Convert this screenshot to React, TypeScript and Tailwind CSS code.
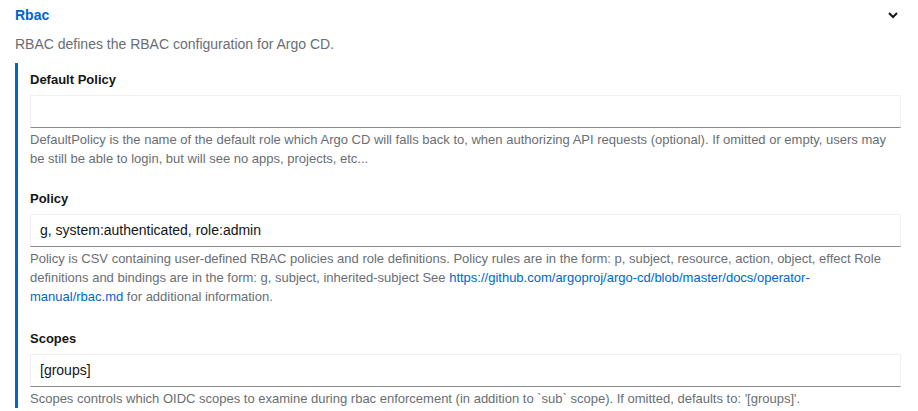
import React from "react";

const Field = ({
  label,
  value,
  children,
}: {
  label: string;
  value: string;
  children: React.ReactNode;
}) => {
  return (
    <div className="flex flex-col">
      <label className="text-[13px] leading-[20px] font-bold text-[#151515] mb-[5px]">
        {label}
      </label>
      <div className="h-[33px] border border-[#f0f0f0] border-b-[#8a8d90] bg-white px-[9px] flex items-center text-[14px] text-[#151515]">
        {value}
      </div>
      <p className="mt-[2px] text-[13px] leading-[19px] text-[#6a6e73]">
        {children}
      </p>
    </div>
  );
};

const App = () => {
  return (
    <div
      className="w-[918px] h-[411px] overflow-hidden bg-white pl-[15px] pr-[17px]"
      style={{ fontFamily: '"Liberation Sans", Arial, sans-serif' }}
    >
      <div className="flex items-center justify-between h-[30px]">
        <span className="text-[14px] font-bold text-[#0066cc]">Rbac</span>
        <svg width="10" height="8" viewBox="0 0 10 8" className="mr-[3px]">
          <path d="M1 2 L5 6 L9 2" fill="none" stroke="#151515" strokeWidth="2" />
        </svg>
      </div>
      <p className="mt-[4px] text-[14px] leading-[20px] text-[#6a6e73]">
        RBAC defines the RBAC configuration for Argo CD.
      </p>
      <div className="mt-[9px] border-l-[3px] border-[#0066cc] pl-[12px] pt-[7px] flex flex-col gap-[21px]">
        <Field label="Default Policy" value="">
          DefaultPolicy is the name of the default role which Argo CD will falls
          back to, when authorizing API requests (optional). If omitted or empty,
          users may be still be able to login, but will see no apps, projects,
          etc...
        </Field>
        <Field label="Policy" value="g, system:authenticated, role:admin">
          Policy is CSV containing user-defined RBAC policies and role
          definitions. Policy rules are in the form: p, subject, resource,
          action, object, effect Role definitions and bindings are in the form:
          g, subject, inherited-subject See{" "}
          <a className="text-[#0066cc]">
            https://github.com/argoproj/argo-cd/blob/master/docs/operator-manual/rbac.md
          </a>{" "}
          for additional information.
        </Field>
        <div className="mt-[2px]">
          <Field label="Scopes" value="[groups]">
            Scopes controls which OIDC scopes to examine during rbac enforcement
            (in addition to `sub` scope). If omitted, defaults to: '[groups]'.
          </Field>
        </div>
      </div>
    </div>
  );
};

export default App;
